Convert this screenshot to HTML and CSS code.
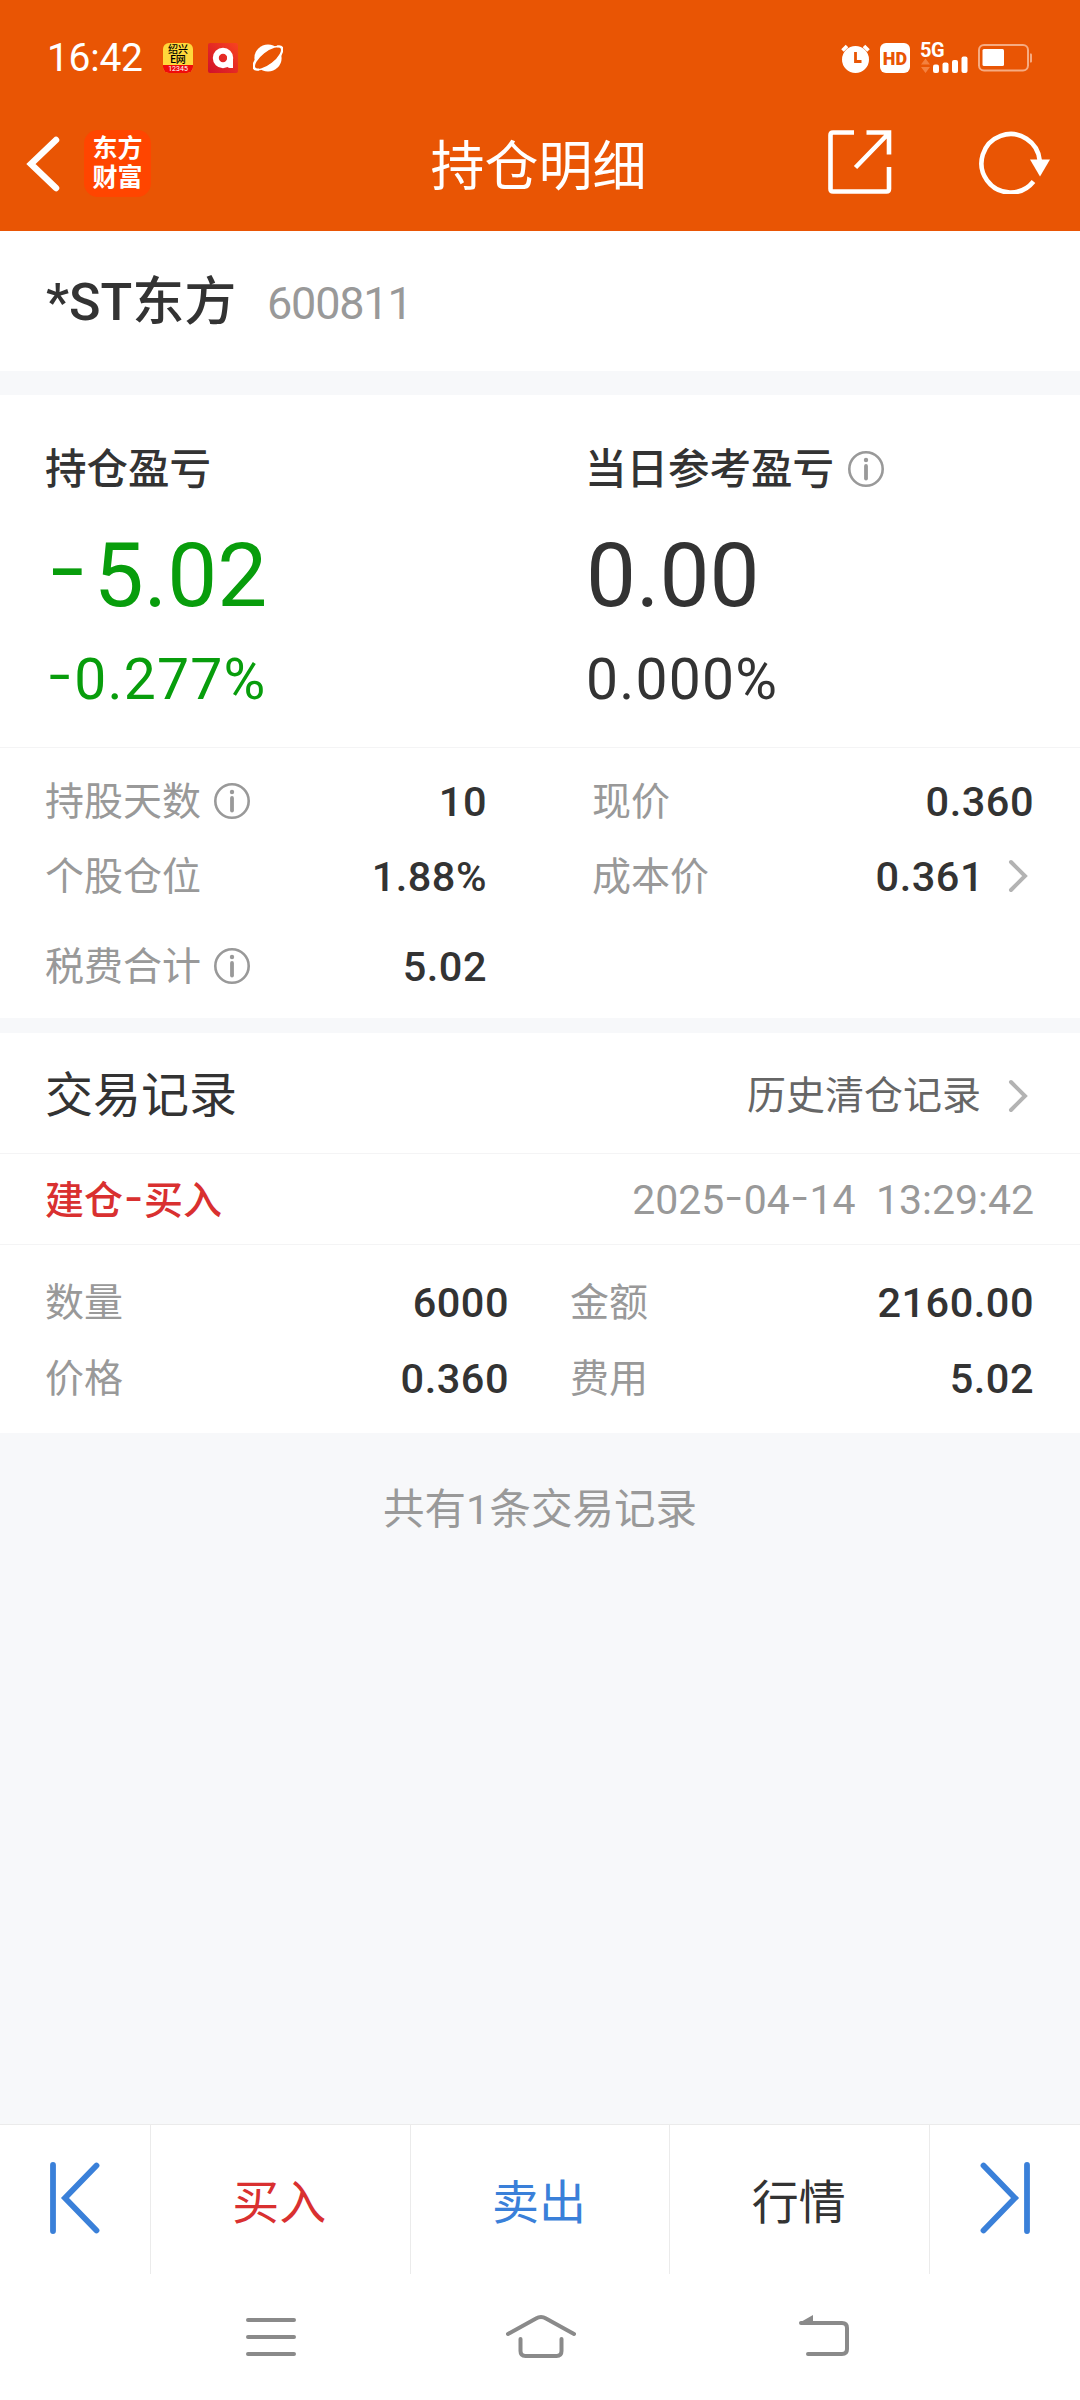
FILE: index.html
```
<!DOCTYPE html>
<html lang="zh-CN">
<head>
    <meta charset="UTF-8">
    <meta name="viewport" content="width=device-width, initial-scale=1.0">
    <title>持仓明细</title>
    <link rel="stylesheet" href="styles.css">
</head>
<body>
    <div class="header">
        <div class="status-bar">
            <div class="status-left">
                <span class="time">16:42</span>
                <div class="app-news">
                    <div class="app-news-name">绍兴<br>E网</div>
                    <div class="app-news-foot">12345</div>
                </div>
                <svg class="app-a" width="30" height="30" viewBox="0 0 30 30">
                    <defs>
                        <linearGradient id="redGrad" x1="1" y1="0" x2="0" y2="1">
                            <stop offset="0" stop-color="#f8431f"/>
                            <stop offset="1" stop-color="#d0102a"/>
                        </linearGradient>
                    </defs>
                    <rect width="30" height="30" rx="2" fill="url(#redGrad)"/>
                    <circle cx="15" cy="15" r="7.2" fill="none" stroke="#fff" stroke-width="6"/>
                    <path d="M19 14h6v11h-3q-3 0-3-3z" fill="#fff"/>
                </svg>
                <svg width="30" height="28" viewBox="0 0 30 28">
                    <circle cx="15" cy="14" r="13.6" fill="#fff"/>
                    <ellipse cx="15" cy="14" rx="16.5" ry="6.8" transform="rotate(-38 15 14)" fill="#e95504" stroke="#fff" stroke-width="1.4"/>
                    <path d="M6 25.5C-1 27-1.5 21 4 14.5M24 2.500c7-1.500 7 4 2 11" fill="none" stroke="#fff" stroke-width="1.8"/>
                </svg>
            </div>
            <div class="status-right">
                <svg width="30" height="30" viewBox="0 0 30 30">
                    <circle cx="14.5" cy="16.5" r="13.5" fill="#fff"/>
                    <path d="M1.500 7.500L6 3M27.500 7.500L23 3" stroke="#fff" stroke-width="3.6"/>
                    <path d="M14.500 9v9.500h6" fill="none" stroke="#e95504" stroke-width="2.8"/>
                </svg>
                <div class="hd">HD</div>
                <div class="signal">
                    <span class="net">5G</span>
                    <svg width="49" height="30" viewBox="0 0 49 30">
                        <path d="M1 21.500l4.500-6 4.500 6zM1 24h9l-4.500 6z" fill="#f4813f"/>
                        <rect x="13" y="21.5" width="6" height="8.5" rx="2" fill="#fff"/>
                        <rect x="22.5" y="19.5" width="6" height="10.5" rx="2" fill="#fff"/>
                        <rect x="32" y="17" width="6" height="13" rx="2" fill="#fff"/>
                        <rect x="41.5" y="13.5" width="6" height="16.5" rx="2" fill="#fff"/>
                    </svg>
                </div>
                <svg width="54" height="28" viewBox="0 0 54 28">
                    <rect x="1" y="1" width="49" height="25.5" rx="5" fill="none" stroke="#f6ab82" stroke-width="2"/>
                    <rect x="4.5" y="5" width="21.5" height="17" rx="1.5" fill="#fff"/>
                    <path d="M52 9.500h1q1 0 1 1v7q0 1-1 1h-1z" fill="#f6ab82"/>
                </svg>
            </div>
        </div>

        <div class="title-bar">
            <div class="title-left">
                <svg width="34" height="56" viewBox="0 0 34 56">
                    <path d="M30 4L5 28l25 24" fill="none" stroke="#fff" stroke-width="6.5" stroke-linecap="round"/>
                </svg>
                <div class="logo">东方<br>财富</div>
            </div>
            <h1>持仓明细</h1>
            <div class="title-right">
                <svg width="64" height="64" viewBox="0 0 64 64" fill="none" stroke="#fff" stroke-width="4.6">
                    <path d="M26 2.500H5q-2.500 0-2.500 2.500v54q0 2.500 2.500 2.500h53.500q2.500 0 2.500-2.500V37"/>
                    <path d="M38.500 2.500H61v22M60 4L27.500 37.500"/>
                </svg>
                <svg width="72" height="64" viewBox="0 0 72 64">
                    <path d="M54.500 51.500A29.200 29.200 0 1 1 60.800 31" fill="none" stroke="#fff" stroke-width="4.6"/>
                    <path d="M51 29.500h20l-10 17z" fill="#fff"/>
                </svg>
            </div>
        </div>
    </div>

    <div class="stock">
        <span class="stock-name">*ST东方</span>
        <span class="stock-code">600811</span>
    </div>

    <div class="profit">
        <div class="profit-col">
            <div class="profit-label">持仓盈亏</div>
            <div class="profit-value green"><span class="minus">-</span>5.02</div>
            <div class="profit-rate green"><span class="minus">-</span>0.277%</div>
        </div>
        <div class="profit-col">
            <div class="profit-label">当日参考盈亏
                <svg class="info" width="36" height="36" viewBox="0 0 36 36">
                    <circle cx="18" cy="18" r="16.7" fill="none" stroke="#999" stroke-width="2.6"/>
                    <circle cx="18" cy="9" r="2.2" fill="#999"/>
                    <path d="M18 15v12.500" stroke="#999" stroke-width="3.8" stroke-linecap="round"/>
                </svg>
            </div>
            <div class="profit-value">0.00</div>
            <div class="profit-rate">0.000%</div>
        </div>
    </div>

    <div class="details">
        <div class="details-row">
            <div class="cell">
                <span class="label">持股天数
                    <svg class="info" width="36" height="36" viewBox="0 0 36 36">
                        <circle cx="18" cy="18" r="16.7" fill="none" stroke="#999" stroke-width="2.6"/>
                        <circle cx="18" cy="9" r="2.2" fill="#999"/>
                        <path d="M18 15v12.500" stroke="#999" stroke-width="3.8" stroke-linecap="round"/>
                    </svg>
                </span>
                <span class="value">10</span>
            </div>
            <div class="cell">
                <span class="label">现价</span>
                <span class="value">0.360</span>
            </div>
        </div>
        <div class="details-row">
            <div class="cell">
                <span class="label">个股仓位</span>
                <span class="value">1.88%</span>
            </div>
            <div class="cell">
                <span class="label">成本价</span>
                <span class="value with-arrow">0.361
                    <svg width="20" height="34" viewBox="0 0 20 34">
                        <path d="M3 3l14 14L3 31" fill="none" stroke="#b3b3b3" stroke-width="4" stroke-linecap="round"/>
                    </svg>
                </span>
            </div>
        </div>
        <div class="details-row last">
            <div class="cell">
                <span class="label">税费合计
                    <svg class="info" width="36" height="36" viewBox="0 0 36 36">
                        <circle cx="18" cy="18" r="16.7" fill="none" stroke="#999" stroke-width="2.6"/>
                        <circle cx="18" cy="9" r="2.2" fill="#999"/>
                        <path d="M18 15v12.500" stroke="#999" stroke-width="3.8" stroke-linecap="round"/>
                    </svg>
                </span>
                <span class="value">5.02</span>
            </div>
        </div>
    </div>

    <div class="records">
        <div class="records-header">
            <h2>交易记录</h2>
            <div class="history with-arrow">历史清仓记录
                <svg width="20" height="34" viewBox="0 0 20 34">
                    <path d="M3 3l14 14L3 31" fill="none" stroke="#b3b3b3" stroke-width="4" stroke-linecap="round"/>
                </svg>
            </div>
        </div>
        <div class="record-title">
            <span class="record-type">建仓<span class="minus">-</span>买入</span>
            <span class="record-date">2025<span class="minus">-</span>04<span class="minus">-</span>14 &nbsp;13:29:42</span>
        </div>
        <div class="record-body">
            <div class="record-row">
                <div class="cell">
                    <span class="label">数量</span>
                    <span class="value">6000</span>
                </div>
                <div class="cell">
                    <span class="label">金额</span>
                    <span class="value">2160.00</span>
                </div>
            </div>
            <div class="record-row">
                <div class="cell">
                    <span class="label">价格</span>
                    <span class="value">0.360</span>
                </div>
                <div class="cell">
                    <span class="label">费用</span>
                    <span class="value">5.02</span>
                </div>
            </div>
        </div>
    </div>

    <div class="total">共有1条交易记录</div>

    <div class="actions">
        <div class="action-edge">
            <svg width="50" height="72" viewBox="0 0 50 72" fill="none" stroke="#3a80d9" stroke-width="5.8" stroke-linecap="round">
                <path d="M3 3v66M46.500 3.500L15 36l31.500 32.500"/>
            </svg>
        </div>
        <div class="action buy">买入</div>
        <div class="action sell">卖出</div>
        <div class="action">行情</div>
        <div class="action-edge">
            <svg width="50" height="72" viewBox="0 0 50 72" fill="none" stroke="#3a80d9" stroke-width="5.8" stroke-linecap="round">
                <path d="M47 3v66M3.500 3.500L35 36L3.500 68.500"/>
            </svg>
        </div>
    </div>

    <div class="system-nav">
        <svg width="50" height="46" viewBox="0 0 50 46" fill="none" stroke="#8a8a8a" stroke-width="4" stroke-linecap="round">
            <path d="M2 6h46M2 23h46M2 40h46"/>
        </svg>
        <svg class="home" width="70" height="46" viewBox="0 0 70 46" fill="none" stroke="#8a8a8a" stroke-width="4" stroke-linecap="round">
            <path d="M2 20L30 4.500q5-3 10 0L68 20M14.500 25v12q0 5 5 5h31q5 0 5-5V25"/>
        </svg>
        <svg width="52" height="46" viewBox="0 0 52 46" fill="none" stroke="#8a8a8a" stroke-width="4" stroke-linecap="round">
            <path d="M3 9h41q5 0 5 5v21q0 5-5 5H10"/>
            <path d="M1 9L15 1v9z" fill="#8a8a8a" stroke="none"/>
        </svg>
    </div>
</body>
</html>
```
FILE: styles.css
```
* {
    box-sizing: border-box;
}
body {
    font-family: Roboto, "Noto Sans CJK SC", sans-serif;
    line-height: 1.4;
    margin: 0;
    height: 2400px;
    display: flex;
    flex-direction: column;
    background-color: #f7f8fa;
    color: #333;
}
svg {
    display: block;
    flex-shrink: 0;
}
h1, h2 {
    margin: 0;
    font-weight: 400;
}
.header {
    height: 231px;
    background-color: #e95504;
    color: #fff;
}
.status-bar {
    display: flex;
    justify-content: space-between;
    padding: 38px 48px 0 47px;
    height: 98px;
}
.status-left, .status-right {
    display: flex;
    align-items: center;
    height: 40px;
}
.status-left {
    gap: 15px;
}
.time {
    width: 101px;
    font-size: 39px;
    line-height: 40px;
    letter-spacing: -0.3px;
}
.app-news {
    width: 30px;
    height: 30px;
    border-radius: 6px;
    overflow: hidden;
    background-color: #ffd83b;
    color: #000;
    text-align: center;
}
.app-news-name {
    height: 22px;
    padding-top: 2px;
    font-size: 10px;
    line-height: 10px;
    font-weight: 500;
}
.app-news-foot {
    height: 8px;
    background-color: #f00b0b;
    color: #fff;
    font-size: 7px;
    line-height: 8px;
}
.hd {
    width: 30px;
    height: 30px;
    margin-left: 9px;
    border-radius: 6px;
    background-color: #fff;
    color: #e95504;
    font-size: 18px;
    line-height: 31px;
    font-weight: 900;
    text-align: center;
}
.signal {
    position: relative;
    margin: 0 9px 0 10px;
}
.net {
    position: absolute;
    left: 0;
    top: 0;
    font-size: 20px;
    line-height: 14px;
    font-weight: 700;
    letter-spacing: -0.5px;
}
.title-bar {
    display: flex;
    justify-content: space-between;
    align-items: center;
    height: 131px;
    padding: 0 29px 0 26px;
}
.title-left, .title-right {
    display: flex;
    align-items: center;
    width: 222px;
}
.title-left {
    gap: 24px;
}
.title-right {
    justify-content: flex-end;
    gap: 87px;
    margin-top: -3px;
}
.logo {
    width: 67px;
    height: 67px;
    padding-top: 4px;
    border-radius: 14px;
    background-color: #ff4500;
    font-size: 25px;
    line-height: 29px;
    font-weight: 700;
    text-align: center;
}
.title-bar h1 {
    padding-top: 8px;
    font-size: 54px;
    line-height: 66px;
}
.stock {
    display: flex;
    align-items: center;
    height: 140px;
    padding: 4px 46px 0;
    background-color: #fff;
    margin-bottom: 24px;
}
.stock-name {
    width: 221px;
    font-size: 52px;
    font-weight: 500;
    white-space: nowrap;
}
.stock-code {
    color: #999;
    font-size: 45px;
    letter-spacing: -1.2px;
}
.profit {
    display: flex;
    height: 352px;
    padding: 50px 0 0 46px;
    background-color: #fff;
}
.profit-col {
    flex: none;
    width: 540px;
}
.profit-label {
    display: flex;
    align-items: center;
    gap: 14px;
    height: 50px;
    margin-left: -1px;
    font-size: 41.5px;
    font-weight: 500;
}
.profit-value {
    height: 110px;
    margin-top: 26px;
    font-size: 89px;
    line-height: 110px;
}
.profit-rate {
    height: 70px;
    margin-top: 14px;
    font-size: 57px;
    line-height: 70px;
    letter-spacing: 1.2px;
}
.green {
    color: #089d0c;
}
.minus {
    display: inline-block;
    margin: 0 0.1em;
    transform: scaleX(1.35) translateY(-0.08em);
}
.profit-value .minus {
    margin-right: 0.16em;
}
.details {
    height: 271px;
    padding-top: 24px;
    border-top: 1px solid #f4f4f5;
    background-color: #fff;
}
.details-row {
    display: flex;
    height: 75px;
    padding: 0 46px 0 45px;
}
.details-row.last {
    margin-top: 15px;
}
.cell {
    display: flex;
    justify-content: space-between;
    align-items: center;
    height: 60px;
}
.details-row .cell:first-child {
    width: 442px;
    margin-right: 105px;
}
.details-row .cell:last-child:not(:first-child) {
    flex: 1;
}
.label {
    display: flex;
    align-items: center;
    gap: 13px;
    color: #999;
    font-size: 39px;
}
.info {
    margin-top: -3px;
}
.value {
    font-size: 41.5px;
    font-weight: 500;
    letter-spacing: 0.5px;
}
.with-arrow {
    display: flex;
    align-items: center;
    gap: 27px;
    padding-right: 6px;
}
.value.with-arrow {
    gap: 24px;
}
.with-arrow svg {
    margin-top: -2px;
}
.records {
    height: 400px;
    margin-top: 15px;
    background-color: #fff;
}
.records-header, .record-title {
    display: flex;
    justify-content: space-between;
    align-items: center;
    padding: 0 46px 0 45px;
    border-bottom: 1px solid #f4f4f5;
}
.records-header {
    height: 121px;
    padding-top: 5px;
}
.records-header h2 {
    font-size: 48px;
}
.history {
    padding-top: 2px;
    color: #666;
    font-size: 39px;
}
.record-title {
    height: 91px;
    padding-top: 4px;
}
.record-type {
    color: #d93030;
    font-size: 39px;
    font-weight: 500;
}
.record-date {
    color: #999;
    font-size: 41px;
}
.record-body {
    padding-top: 28px;
}
.record-row {
    display: flex;
    height: 76px;
    padding: 0 46px 0 45px;
}
.record-row .cell:first-child {
    width: 464px;
    margin-right: 61px;
}
.record-row .cell:last-child {
    flex: 1;
}
.total {
    flex: 1;
    padding-top: 49px;
    color: #999;
    font-size: 41.5px;
    line-height: 56px;
    text-align: center;
}
.actions {
    display: flex;
    height: 150px;
    border-top: 1px solid #ebebeb;
    background-color: #fff;
}
.action-edge {
    display: flex;
    justify-content: center;
    width: 150px;
    padding-top: 37px;
}
.action {
    flex: 1;
    height: 149px;
    padding-right: 2px;
    border-left: 1px solid #ebebeb;
    font-size: 47px;
    line-height: 156px;
    text-align: center;
}
.action:nth-child(4) {
    border-right: 1px solid #ebebeb;
}
.buy {
    color: #d93030;
}
.sell {
    color: #3a80d9;
}
.system-nav {
    display: flex;
    justify-content: space-between;
    height: 126px;
    padding: 40px 230px 0 246px;
    background-color: #fff;
}
.home {
    margin-right: 12px;
}
```
